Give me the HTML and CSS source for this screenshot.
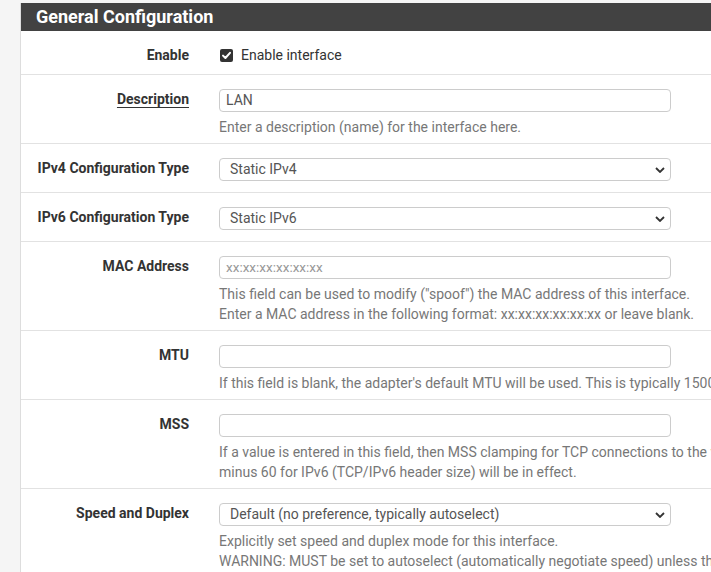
FILE: index.html
```html
<!DOCTYPE html>
<html>
<head>
<meta charset="utf-8">
<link rel="stylesheet" href="styles.css">
</head>
<body>
<div class="panel">
  <div class="panel-heading">General Configuration</div>
  <div class="panel-body">
    <div class="row row-enable">
      <div class="label">Enable</div>
      <div class="control">
        <label class="check">
          <svg class="checkbox" width="13" height="13" viewBox="0 0 13 13"><rect x="0" y="0" width="13" height="13" rx="2" fill="#333"/><path d="M3 6.6 L5.4 9 L10 3.8" stroke="#fff" stroke-width="2" fill="none" stroke-linecap="round" stroke-linejoin="round"/></svg>
          <span>Enable interface</span>
        </label>
      </div>
    </div>
    <div class="row">
      <div class="label"><span class="ul">Description</span></div>
      <div class="control">
        <div class="input">LAN</div>
        <div class="help">Enter a description (name) for the interface here.</div>
      </div>
    </div>
    <div class="row nohelp">
      <div class="label">IPv4 Configuration Type</div>
      <div class="control">
        <div class="select">Static IPv4</div>
      </div>
    </div>
    <div class="row nohelp">
      <div class="label">IPv6 Configuration Type</div>
      <div class="control">
        <div class="select">Static IPv6</div>
      </div>
    </div>
    <div class="row">
      <div class="label">MAC Address</div>
      <div class="control">
        <div class="input placeholder">xx:xx:xx:xx:xx:xx</div>
        <div class="help">This field can be used to modify ("spoof") the MAC address of this interface.<br>Enter a MAC address in the following format: xx:xx:xx:xx:xx:xx or leave blank.</div>
      </div>
    </div>
    <div class="row">
      <div class="label">MTU</div>
      <div class="control">
        <div class="input"></div>
        <div class="help">If this field is blank, the adapter's default MTU will be used. This is typically 1500 bytes but can vary in some circumstances.</div>
      </div>
    </div>
    <div class="row">
      <div class="label">MSS</div>
      <div class="control">
        <div class="input"></div>
        <div class="help">If a value is entered in this field, then MSS clamping for TCP connections to the value entered above minus 40 for IPv4 (TCP/IPv4 header size) and<br>minus 60 for IPv6 (TCP/IPv6 header size) will be in effect.</div>
      </div>
    </div>
    <div class="row">
      <div class="label">Speed and Duplex</div>
      <div class="control">
        <div class="select">Default (no preference, typically autoselect)</div>
        <div class="help">Explicitly set speed and duplex mode for this interface.<br>WARNING: MUST be set to autoselect (automatically negotiate speed) unless the port this interface connects to has its speed and duplex forced.</div>
      </div>
    </div>
  </div>
</div>
</body>
</html>
```

FILE: styles.css
```css
html, body {
  margin: 0;
  padding: 0;
}
body {
  background: #f5f5f5;
  padding: 3px 0 0 20px;
  width: 691px;
  height: 569px;
  overflow: hidden;
  font-family: Roboto, "Liberation Sans", sans-serif;
  font-size: 14px;
  color: #333;
}
.panel {
  width: 1000px;
  background: #fff;
  border-left: 1px solid #ddd;
}
.panel-heading {
  background: #424242;
  color: #fff;
  font-weight: bold;
  font-size: 18px;
  height: 28px;
  line-height: 28px;
  padding-left: 15px;
}
.row {
  display: flex;
  padding: 14px 0 10px;
  border-bottom: 1px solid #e2e2e2;
}
.row-enable {
  padding-top: 14px;
  padding-bottom: 9px;
}
.nohelp {
  padding-bottom: 11px;
}
.label {
  width: 168px;
  padding-right: 15px;
  text-align: right;
  font-weight: bold;
  line-height: 20px;
  color: #333;
  flex-shrink: 0;
}
.ul {
  text-decoration: underline;
  text-underline-offset: 3px;
}
.control {
  padding-left: 15px;
  flex: 1;
}
.check {
  display: flex;
  align-items: center;
  height: 20px;
  gap: 8px;
}
.checkbox {
  margin-left: 1px;
  display: block;
}
.input, .select {
  width: 452px;
  height: 23px;
  box-sizing: border-box;
  border: 1px solid #ccc;
  border-radius: 4px;
  background: #fff;
  color: #555;
  line-height: 21px;
  padding-left: 6px;
}
.select {
  padding-left: 10px;
  background-image: url("data:image/svg+xml;utf8,<svg xmlns='http://www.w3.org/2000/svg' width='10' height='6' viewBox='0 0 10 6'><path d='M1 1 L5 5 L9 1' stroke='%23333' stroke-width='1.8' fill='none'/></svg>");
  background-repeat: no-repeat;
  background-position: right 5px center;
}
.placeholder {
  color: #999;
  font-size: 13.5px;
}
.help {
  color: #777;
  line-height: 20px;
  margin: 5px 0 -4px;
  white-space: nowrap;
}
```
